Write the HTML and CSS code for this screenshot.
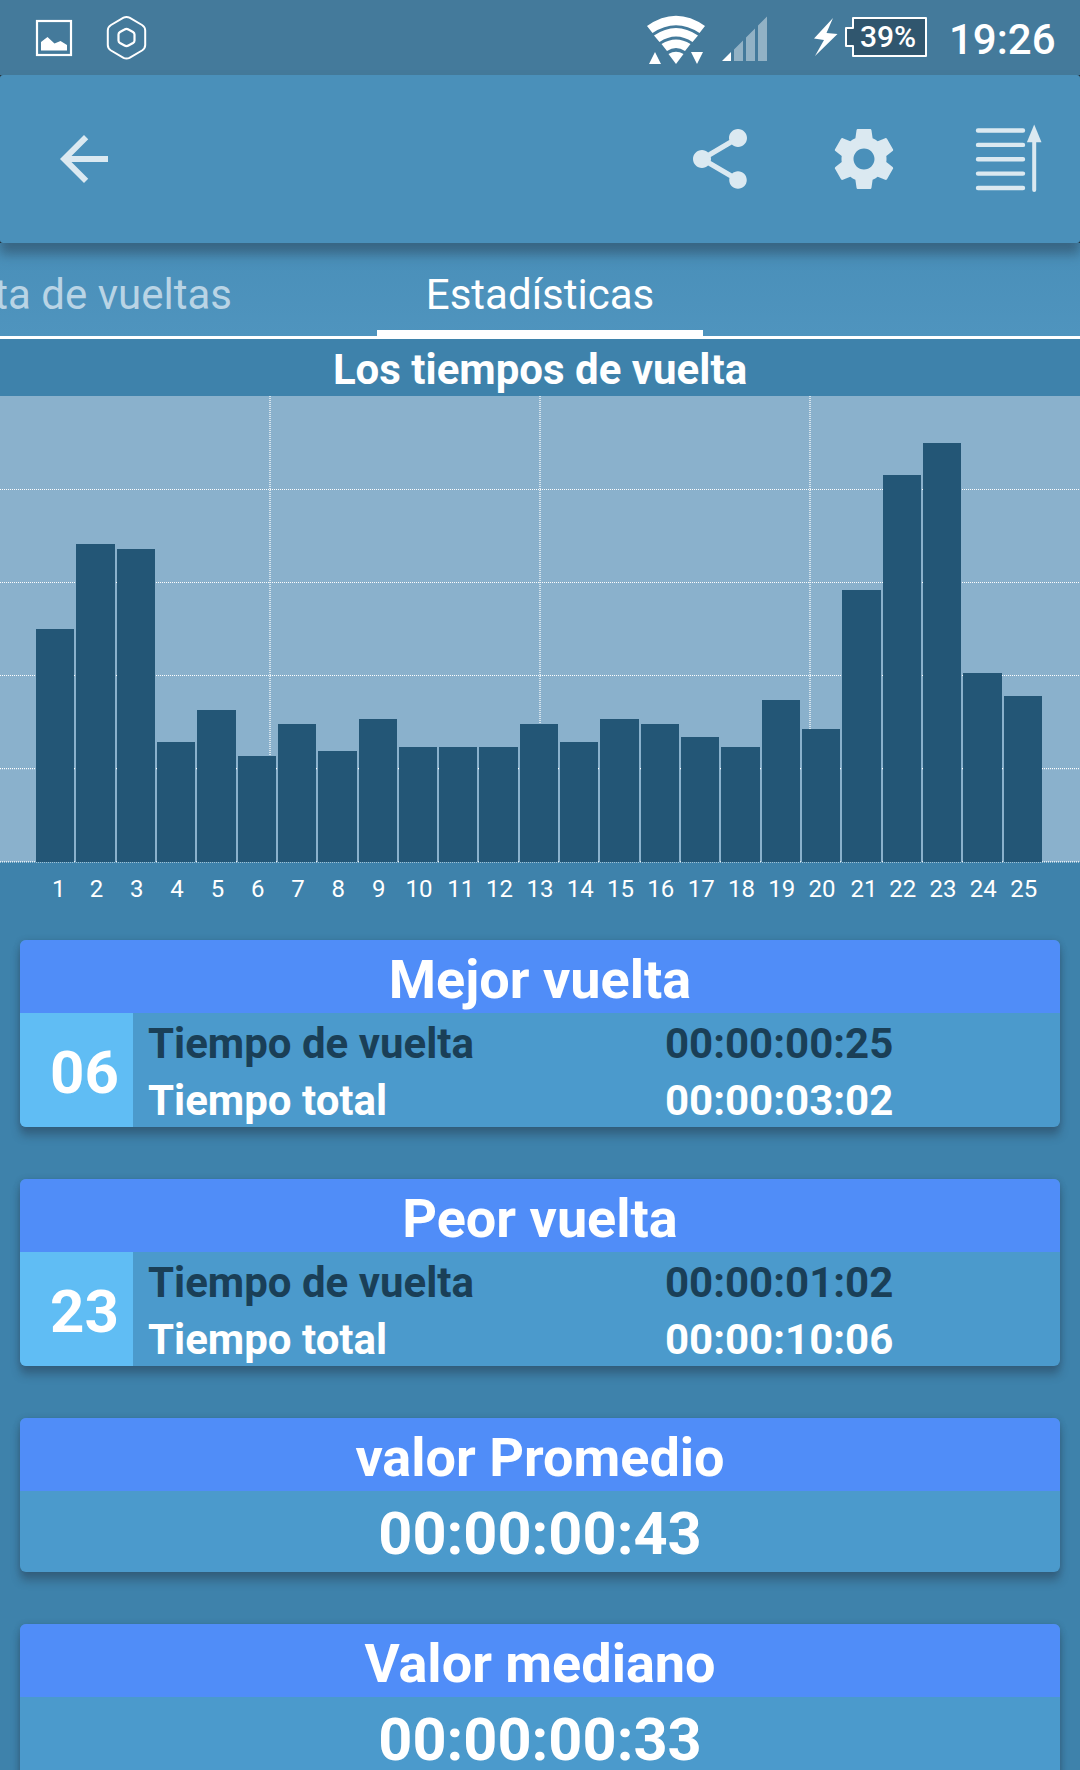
FILE: index.html
```
<!DOCTYPE html>
<html lang="es">
<head>
    <meta charset="UTF-8">
    <meta name="viewport" content="width=device-width, initial-scale=1.0">
    <title>Estadísticas</title>
    <link rel="stylesheet" href="styles.css">
</head>
<body>
    <!-- Status bar -->
    <div class="status-bar">
        <svg class="status-left" width="150" height="75" viewBox="0 0 150 75" fill="none" stroke="#fff">
            <rect x="37" y="21" width="34" height="34" stroke-width="2.2"/>
            <path d="M41 50.500V42l6.500-5 7 6.500 6-2.500 6.500 4v5.500z" fill="#fff" stroke="none"/>
            <path d="M123.500 17.700q3-1.400 6 0l12.500 7.300q3.200 2 3.200 5.500v14.500q0 3.500-3.200 5.500l-12.500 7.300q-3 1.400-6 0l-12.500-7.300q-3.200-2-3.200-5.500V30.500q0-3.500 3.200-5.500z" stroke-width="2"/>
            <path d="M124.500 29.500q2-1.200 4 0l4.500 2.500q1.500 1 1.500 2.600v5.800q0 1.600-1.500 2.600l-4.500 2.500q-2 1.200-4 0l-4.500-2.500q-1.500-1-1.500-2.600v-5.800q0-1.600 1.500-2.600z" stroke-width="2.200"/>
        </svg>
        <svg class="status-right" width="210" height="75" viewBox="640 0 210 75" fill="#fff">
            <!-- wifi -->
            <path d="M647 26q29-20.500 58 0l-5.500 7q-23.500-15.500-47 0z"/>
            <path d="M654 35.500q22-15 44 0l-5.500 6.500q-16.500-11-33 0z"/>
            <path d="M661.500 44q14.500-9 29 0l-5.500 7q-9-6-18 0z"/>
            <path d="M668.500 54q7.500-4.500 15 0L676 64z"/>
            <path d="M649 64l6-12 6 12zM691 52h12l-6 12z"/>
            <!-- signal -->
            <path d="M722 61l9-9v9z"/>
            <path d="M734 61V49.500l9-9V61zM746 61V37.500l9-9V61zM758 61V25.500l9-9V61z" opacity=".42"/>
            <!-- charging bolt -->
            <path d="M833 18l-19 20.500 10 1.500-9 16 22.500-22-11-1z"/>
        </svg>
        <div class="battery">
            <svg class="battery-shape" width="82" height="41" viewBox="0 0 82 41">
                <path d="M8 1h73v38H8V29H1V11h7z" fill="#30566e" stroke="#fff" stroke-width="2" stroke-linejoin="round"/>
            </svg>
            <span class="battery-level">39%</span>
        </div>
        <div class="clock">19:26</div>
    </div>

    <!-- Toolbar -->
    <div class="toolbar-wrap">
        <div class="toolbar">
            <svg class="icon" viewBox="0 0 24 24"><path d="M20 11H7.830l5.590-5.590L12 4l-8 8 8 8 1.410-1.410L7.830 13H20v-2z"/></svg>
            <div class="actions">
                <svg class="icon" viewBox="0 0 24 24"><path d="M18 16.080c-.76 0-1.440.3-1.960.77L8.910 12.700c.05-.23.09-.46.09-.7s-.04-.47-.09-.7l7.050-4.110c.54.5 1.250.81 2.040.81 1.660 0 3-1.340 3-3s-1.340-3-3-3-3 1.340-3 3c0 .24.04.47.09.7L8.040 9.810C7.500 9.310 6.790 9 6 9c-1.660 0-3 1.340-3 3s1.340 3 3 3c.79 0 1.500-.31 2.040-.81l7.120 4.160c-.05.21-.08.43-.08.65 0 1.610 1.310 2.920 2.920 2.920s2.920-1.310 2.920-2.920-1.310-2.920-2.920-2.920z"/></svg>
                <svg class="icon" viewBox="0 0 24 24"><path d="M19.430 12.980c.04-.32.07-.64.07-.98s-.03-.66-.07-.98l2.110-1.650c.19-.15.24-.42.12-.64l-2-3.460c-.12-.22-.39-.3-.61-.22l-2.490 1c-.52-.4-1.080-.73-1.690-.98l-.38-2.650C14.460 2.180 14.250 2 14 2h-4c-.25 0-.46.18-.49.42l-.38 2.650c-.61.25-1.170.59-1.690.98l-2.490-1c-.23-.09-.49 0-.61.22l-2 3.460c-.13.22-.07.49.12.64l2.110 1.650c-.04.32-.07.65-.07.98s.03.66.07.98l-2.110 1.650c-.19.15-.24.42-.12.64l2 3.460c.12.22.39.3.61.22l2.490-1c.52.4 1.080.73 1.690.98l.38 2.650c.03.24.24.42.49.42h4c.25 0 .46-.18.49-.42l.38-2.650c.61-.25 1.170-.59 1.690-.98l2.490 1c.23.09.49 0 .61-.22l2-3.460c.12-.22.07-.49-.12-.64l-2.110-1.650zM12 15.500c-1.930 0-3.500-1.570-3.500-3.500s1.570-3.500 3.500-3.500 3.500 1.570 3.500 3.500-1.570 3.500-3.500 3.500z"/></svg>
                <svg class="icon" viewBox="0 0 72 72">
                    <path d="M6 7.500h45M6 21.900h45M6 36.300h45M6 50.600h45M6 65h45" stroke="#dbe9f1" stroke-width="4.400" stroke-linecap="round"/>
                    <path d="M62.200 16v51" stroke="#dbe9f1" stroke-width="4" stroke-linecap="round"/>
                    <path d="M62.200 1.500l7.300 17.800H54.900z"/>
                </svg>
            </div>
        </div>
    </div>

    <!-- Tabs -->
    <div class="tabs">
        <div class="tab tab-prev">Lista de vueltas</div>
        <div class="tab tab-active">Estadísticas</div>
        <div class="tab"></div>
    </div>

    <!-- Lap chart -->
    <h2 class="chart-title">Los tiempos de vuelta</h2>
    <div class="plot">
        <svg class="grid" width="1080" height="467" viewBox="0 0 1080 467" fill="none">
            <path d="M0 93.500h1080M0 186.500h1080M0 279.500h1080M0 372.700h1080M0 465.800h1080" stroke="#fff" stroke-width="1.200" stroke-dasharray="1 1"/>
            <path d="M270 0v466M540 0v466M810 0v466" stroke="#fff" stroke-opacity=".65" stroke-width="2" stroke-dasharray="1 1"/>
        </svg>
        <div class="bars">
            <div class="bar" style="height: 233px"></div>
            <div class="bar" style="height: 318px"></div>
            <div class="bar" style="height: 313px"></div>
            <div class="bar" style="height: 120px"></div>
            <div class="bar" style="height: 152.3px"></div>
            <div class="bar" style="height: 106px"></div>
            <div class="bar" style="height: 138px"></div>
            <div class="bar" style="height: 111px"></div>
            <div class="bar" style="height: 143px"></div>
            <div class="bar" style="height: 115.4px"></div>
            <div class="bar" style="height: 115.4px"></div>
            <div class="bar" style="height: 115px"></div>
            <div class="bar" style="height: 138.4px"></div>
            <div class="bar" style="height: 120px"></div>
            <div class="bar" style="height: 143.4px"></div>
            <div class="bar" style="height: 138.2px"></div>
            <div class="bar" style="height: 125px"></div>
            <div class="bar" style="height: 115px"></div>
            <div class="bar" style="height: 162px"></div>
            <div class="bar" style="height: 133.5px"></div>
            <div class="bar" style="height: 272.2px"></div>
            <div class="bar" style="height: 387.5px"></div>
            <div class="bar" style="height: 419.5px"></div>
            <div class="bar" style="height: 189px"></div>
            <div class="bar" style="height: 166.4px"></div>
        </div>
    </div>
    <div class="labels">
        <span class="first">1</span><span>2</span><span>3</span><span>4</span><span>5</span>
        <span>6</span><span>7</span><span>8</span><span>9</span><span>10</span>
        <span class="ends-one">11</span><span>12</span><span>13</span><span>14</span><span>15</span>
        <span>16</span><span>17</span><span>18</span><span>19</span><span>20</span>
        <span class="ends-one">21</span><span>22</span><span>23</span><span>24</span><span>25</span>
    </div>

    <!-- Stat cards -->
    <div class="cards">
        <div class="card">
            <h3 class="card-title">Mejor vuelta</h3>
            <div class="lap">
                <div class="lap-number">06</div>
                <div class="lap-times">
                    <div class="row dark"><span>Tiempo de vuelta</span><span>00:00:00:25</span></div>
                    <div class="row"><span>Tiempo total</span><span>00:00:03:02</span></div>
                </div>
            </div>
        </div>
        <div class="card">
            <h3 class="card-title">Peor vuelta</h3>
            <div class="lap">
                <div class="lap-number">23</div>
                <div class="lap-times">
                    <div class="row dark"><span>Tiempo de vuelta</span><span>00:00:01:02</span></div>
                    <div class="row"><span>Tiempo total</span><span>00:00:10:06</span></div>
                </div>
            </div>
        </div>
        <div class="card">
            <h3 class="card-title">valor Promedio</h3>
            <div class="value">00:00:00:43</div>
        </div>
        <div class="card">
            <h3 class="card-title">Valor mediano</h3>
            <div class="value">00:00:00:33</div>
        </div>
    </div>
</body>
</html>
```
FILE: styles.css
```
* {
    box-sizing: border-box;
}
body {
    margin: 0;
    width: 1080px;
    height: 1770px;
    overflow: hidden;
    font-family: Roboto, "Liberation Sans", sans-serif;
    color: #fff;
    background: #3e82ab;
}
h2, h3 {
    margin: 0;
    font-weight: bold;
    text-align: center;
}
svg {
    display: block;
}

/* Status bar */
.status-bar {
    display: flex;
    height: 75px;
    background: #447a9b;
}
.status-right {
    margin-left: 490px;
    margin-right: -5px;
}
.battery {
    position: relative;
    width: 82px;
    height: 41px;
    margin-top: 17px;
}
.battery-level {
    position: absolute;
    top: 0;
    left: 15px;
    font-size: 30px;
    line-height: 40px;
    font-weight: 500;
}
.clock {
    margin-left: 22px;
    font-size: 42px;
    line-height: 79px;
    font-weight: 500;
}

/* Toolbar */
.toolbar-wrap {
    position: relative;
    z-index: 1;
    height: 168px;
    background: #222c33;
    box-shadow: 0 11px 11px rgba(40, 62, 80, 0.5);
}
.toolbar {
    display: flex;
    justify-content: space-between;
    align-items: center;
    height: 168px;
    padding: 0 36px 0 48px;
    border-radius: 3px;
    background: #4a90ba;
}
.actions {
    display: flex;
    gap: 72px;
}
.icon {
    width: 72px;
    height: 72px;
    fill: #dbe9f1;
}

/* Tabs */
.tabs {
    display: flex;
    justify-content: space-between;
    height: 96px;
    border-bottom: 3px solid #fff;
    background: linear-gradient(#498fb9, #4f94be);
}
.tab {
    width: 326px;
    height: 96px;
    font-size: 42px;
    line-height: 103px;
    text-align: center;
    white-space: nowrap;
}
.tab-prev {
    display: flex;
    justify-content: flex-end;
    padding-right: 94px;
    color: #b9d4e5;
}
.tab-active {
    border-bottom: 9px solid #fff;
}

/* Lap chart */
.chart-title {
    height: 57px;
    font-size: 42px;
    line-height: 62px;
}
.plot {
    position: relative;
    height: 466px;
    background: #8ab1cc;
}
.grid {
    position: absolute;
    top: 0;
    left: 0;
}
.bars {
    position: relative;
    display: flex;
    align-items: flex-end;
    gap: 2px;
    height: 466px;
    padding: 0 38px 0 36px;
}
.bar {
    flex: 1;
    background: #235676;
}
.labels {
    display: flex;
    height: 78px;
    padding: 12px 36px 0 36px;
    font-size: 24px;
    line-height: 30px;
}
.labels span {
    flex: 1 1 0;
    min-width: 0;
    text-align: center;
}
.labels .first {
    text-indent: 5px;
}
.labels .ends-one {
    text-indent: 3px;
}

/* Cards */
.cards {
    display: flex;
    flex-direction: column;
    gap: 52px;
    padding: 0 20px;
}
.card {
    border-radius: 6px;
    overflow: hidden;
    background: #4b9acc;
    box-shadow: 0 9px 8px rgba(40, 60, 80, 0.4), 0 1px 6px rgba(40, 60, 80, 0.3);
}
.card-title {
    height: 73px;
    font-size: 54px;
    line-height: 79px;
    background: #508df8;
}
.lap {
    display: flex;
    height: 114px;
}
.lap-number {
    width: 113px;
    padding-left: 30px;
    font-size: 60px;
    font-weight: bold;
    line-height: 119px;
    background: #60bdf4;
}
.lap-times {
    flex: 1;
    padding-left: 15px;
}
.row {
    display: grid;
    grid-template-columns: 517px 1fr;
    height: 57px;
    font-size: 42px;
    font-weight: bold;
    line-height: 61px;
}
.dark {
    color: #1a3f57;
}
.value {
    height: 81px;
    font-size: 59.5px;
    font-weight: bold;
    line-height: 87px;
    text-align: center;
}
```
